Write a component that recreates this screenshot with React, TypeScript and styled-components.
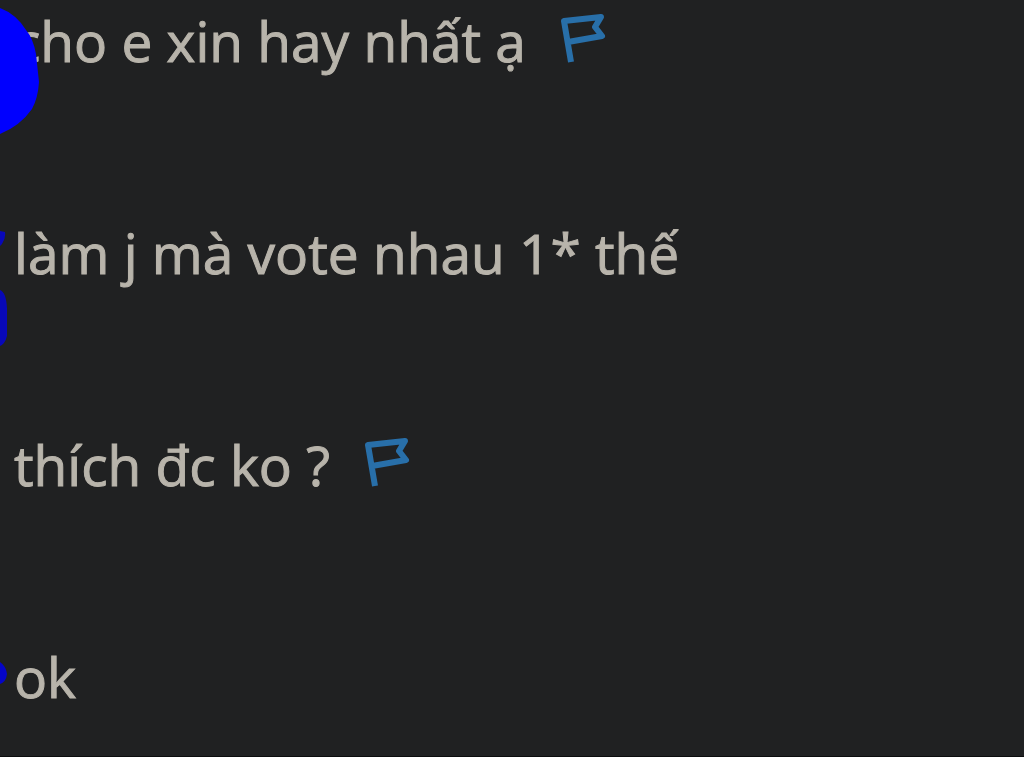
import React from "react";
import styled, { createGlobalStyle } from "styled-components";

const GlobalStyle = createGlobalStyle`
  * { box-sizing: border-box; }
  body {
    margin: 0;
    background: #202122;
    color: #b8b4ab;
    font-family: "Open Sans", "Noto Sans", sans-serif;
  }
`;

const Thread = styled.main`
  min-height: 100vh;
  overflow: hidden;
  border-bottom: 1px solid #0c0d0e;
`;

const CommentList = styled.ul`
  display: flex;
  flex-direction: column;
  gap: 130px;
  margin: 0;
  padding: 0 14px;
  list-style: none;
`;

const Comment = styled.li`
  position: relative;
  display: flex;
  align-items: flex-start;
  gap: 32px;
`;

const CommentText = styled.p`
  margin: 0;
  font-size: 55px;
  line-height: 82px;
  -webkit-text-stroke: 1px currentColor;
`;

const FlagLink = styled.a`
  display: flex;
  padding-top: 12px;
  color: #286fa9;
`;

const Scribble = styled.svg<{ $top: number }>`
  position: absolute;
  left: -14px;
  top: ${(p) => p.$top}px;
`;

function Flag() {
  return (
    <FlagLink href="#report" aria-label="Report comment">
      <svg width="48" height="54" viewBox="0 0 48 54" fill="none" stroke="currentColor" strokeWidth="6">
        <path d="M13 50 L6 9 L43 5 L37 15 L44 24 L10 30" strokeLinejoin="round" />
      </svg>
    </FlagLink>
  );
}

type Mark = { top: number; width: number; height: number; color: string; path: string };

const comments: { text: string; flagged?: boolean; mark?: Mark }[] = [
  {
    text: "cho e xin hay nhất ạ",
    flagged: true,
    mark: {
      top: 0,
      width: 44,
      height: 140,
      color: "#0000ff",
      path: "M0 8 Q16 14 26 30 Q33 38 36 54 L39 82 Q38 98 32 109 Q20 126 0 134 Z",
    },
  },
  {
    text: "làm j mà vote nhau 1* thế",
    mark: {
      top: 12,
      width: 12,
      height: 124,
      color: "#0808b8",
      path: "M0 7 L5 8 Q6 14 2 20 L0 22 Z M0 66 Q6 68 7 84 L7 112 Q5 120 0 122 Z",
    },
  },
  { text: "thích đc ko ?", flagged: true },
  {
    text: "ok",
    mark: {
      top: 22,
      width: 12,
      height: 32,
      color: "#0505c8",
      path: "M0 4 Q6 8 7 16 Q6 24 0 26 Z",
    },
  },
];

export default function App() {
  return (
    <>
      <GlobalStyle />
      <Thread>
        <CommentList>
          {comments.map(({ text, flagged, mark }) => (
            <Comment key={text}>
              <CommentText>{text}</CommentText>
              {flagged && <Flag />}
              {mark && (
                <Scribble $top={mark.top} width={mark.width} height={mark.height} aria-hidden="true">
                  <path d={mark.path} fill={mark.color} />
                </Scribble>
              )}
            </Comment>
          ))}
        </CommentList>
      </Thread>
    </>
  );
}
